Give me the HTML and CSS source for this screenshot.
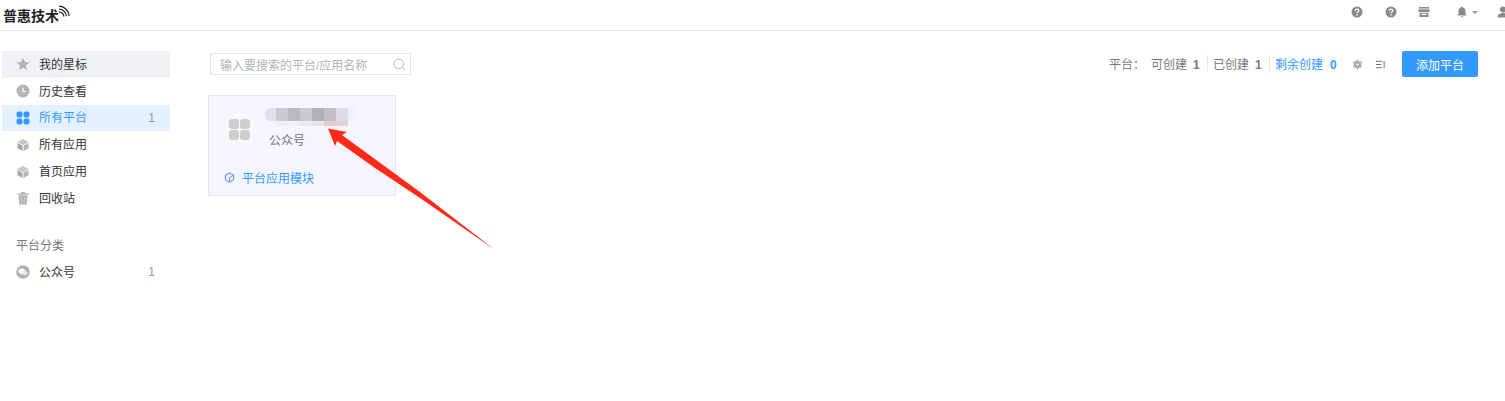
FILE: index.html
```html
<!DOCTYPE html>
<html>
<head>
    <title>普惠技术</title>
    <link rel="stylesheet" href="styles.css">
</head>
<body>
    <header class="top-bar">
        <div class="logo">普惠技术<svg class="logo-wifi" viewBox="0 0 12 12" width="12" height="12"><path d="M1 1.200C6 1 11 5.500 11 11M1 4C4.800 4 8.400 7.500 8.400 11.200M1 6.800C3.400 6.800 5.800 9 5.800 11.400" fill="none" stroke="#222" stroke-width="1.200"/></svg></div>
        <div class="top-icons">
            <svg class="top-icon" viewBox="0 0 12 12"><circle cx="6" cy="6" r="5.500" fill="#8a8a8a"/><path d="M4.200 4.700C4.300 2.600 7.900 2.700 7.800 4.700C7.800 6 6 6 6 7.300" fill="none" stroke="#fff" stroke-width="1.200"/><rect x="5.300" y="8.200" width="1.400" height="1.400" fill="#fff"/></svg>
            <svg class="top-icon" viewBox="0 0 12 12"><circle cx="6" cy="6" r="5.500" fill="#8a8a8a"/><path d="M4.200 4.700C4.300 2.600 7.900 2.700 7.800 4.700C7.800 6 6 6 6 7.300" fill="none" stroke="#fff" stroke-width="1.200"/><rect x="5.300" y="8.200" width="1.400" height="1.400" fill="#fff"/></svg>
            <svg class="top-icon store" viewBox="0 0 12 12"><path d="M1 1h10v1.500H1zM.5 3.200h11V6H.5zM1.500 6.800h9V11h-9z" fill="#8a8a8a"/><rect x="3.500" y="7.800" width="5" height="1.200" fill="#fff"/></svg>
            <span class="bell-group">
                <svg class="top-icon" viewBox="0 0 12 12"><path d="M6 .5C6.600 .5 7 1 7 1.500C8.800 2 9.500 3.500 9.500 5.500V8L10.800 9.600H1.200L2.500 8V5.500C2.500 3.500 3.200 2 5 1.500C5 1 5.400 .5 6 .5ZM4.700 10.300H7.300C7.200 11.800 4.800 11.800 4.700 10.300Z" fill="#8a8a8a"/></svg>
                <span class="caret"></span>
            </span>
            <svg class="top-icon" viewBox="0 0 12 12"><circle cx="6" cy="3.500" r="3" fill="#8a8a8a"/><path d="M.5 11.500C.5 8 3 7 6 7S11.500 8 11.500 11.500Z" fill="#8a8a8a"/></svg>
        </div>
    </header>

    <div class="page">
        <aside class="sidebar">
            <ul class="nav-list">
                <li class="nav-item starred">
                    <svg class="nav-icon" viewBox="0 0 14 14"><path d="M7 .8L8.900 4.900L13.400 5.400L10 8.500L11 13L7 10.700L3 13L4 8.500L.6 5.400L5.100 4.900Z" fill="#b4b4b4"/></svg>
                    <span class="nav-label">我的星标</span>
                </li>
                <li class="nav-item">
                    <svg class="nav-icon" viewBox="0 0 14 14"><circle cx="7" cy="7" r="6.500" fill="#b4b4b4"/><path d="M7 3.500V7.500H10" fill="none" stroke="#fff" stroke-width="1.200"/></svg>
                    <span class="nav-label">历史查看</span>
                </li>
                <li class="nav-item active">
                    <svg class="nav-icon" viewBox="0 0 14 14"><g fill="#3399ff"><rect x=".5" y=".5" width="6" height="6" rx="2.200"/><rect x="7.500" y=".5" width="6" height="6" rx="2.200"/><rect x=".5" y="7.500" width="6" height="6" rx="2.200"/><rect x="7.500" y="7.500" width="6" height="6" rx="2.200"/></g></svg>
                    <span class="nav-label">所有平台</span>
                    <span class="nav-count">1</span>
                </li>
                <li class="nav-item">
                    <svg class="nav-icon" viewBox="0 0 14 14"><path d="M7 1L12.500 4L7 7L1.500 4Z" fill="#c4c4c4"/><path d="M1.500 4.800L6.500 7.700V13L1.500 10.200Z" fill="#a8a8a8"/><path d="M12.500 4.800L7.500 7.700V13L12.500 10.200Z" fill="#b4b4b4"/></svg>
                    <span class="nav-label">所有应用</span>
                </li>
                <li class="nav-item">
                    <svg class="nav-icon" viewBox="0 0 14 14"><path d="M7 1L12.500 4L7 7L1.500 4Z" fill="#c4c4c4"/><path d="M1.500 4.800L6.500 7.700V13L1.500 10.200Z" fill="#a8a8a8"/><path d="M12.500 4.800L7.500 7.700V13L12.500 10.200Z" fill="#b4b4b4"/></svg>
                    <span class="nav-label">首页应用</span>
                </li>
                <li class="nav-item">
                    <svg class="nav-icon" viewBox="0 0 14 14"><path d="M1.500 2.300H12.500V3.700H1.500ZM5 1H9V2.300H5Z" fill="#b4b4b4"/><path d="M2.500 4.300H11.500L10.800 13.500H3.200Z" fill="#b4b4b4"/><path d="M5.500 6V11.500M8.500 6V11.500" stroke="#c8c8d2" stroke-width="1"/></svg>
                    <span class="nav-label">回收站</span>
                </li>
            </ul>
            <div class="nav-title">平台分类</div>
            <ul class="nav-list">
                <li class="nav-item">
                    <svg class="nav-icon" viewBox="0 0 14 14"><circle cx="7" cy="7" r="6.800" fill="#b0b0b0"/><ellipse cx="5.800" cy="6.200" rx="3.400" ry="2.600" fill="#fff"/><ellipse cx="8.800" cy="8" rx="2.800" ry="2.200" fill="#e8e8e8"/></svg>
                    <span class="nav-label">公众号</span>
                    <span class="nav-count">1</span>
                </li>
            </ul>
        </aside>

        <main class="content">
            <div class="toolbar">
                <div class="search-box">
                    <span class="search-hint">输入要搜索的平台/应用名称</span>
                    <svg class="search-icon" viewBox="0 0 13 13"><circle cx="5.800" cy="5.800" r="4.800" fill="none" stroke="#b8b8b8" stroke-width="1"/><path d="M9.300 9.300L12 12" stroke="#b8b8b8" stroke-width="1"/></svg>
                </div>
                <div class="toolbar-right">
                    <div class="stats">
                        <span class="stats-title">平台：</span>
                        <span class="stat">可创建<b>1</b></span>
                        <span class="stat">已创建<b>1</b></span>
                        <span class="stat remain">剩余创建<b>0</b></span>
                    </div>
                    <svg class="tool-icon gear" viewBox="0 0 12 12"><g fill="none" stroke="#888" stroke-width=".9"><circle cx="6" cy="6" r="1.600"/><path d="M6 .8L10.500 8.700H1.500Z"/><path d="M6 11.200L10.500 3.300H1.500Z"/></g></svg>
                    <svg class="tool-icon" viewBox="0 0 12 12"><path d="M1 2.500H8M1 6H7M1 9.500H8" stroke="#666" stroke-width="1"/><path d="M10 3.500V10" stroke="#5a8fd0" stroke-width="1.200"/><path d="M8.500 4.500L10 2.800L11.500 4.500" fill="none" stroke="#888" stroke-width=".8"/></svg>
                    <button class="add-btn">添加平台</button>
                </div>
            </div>

            <div class="card">
                <div class="card-head">
                    <div class="card-logo">
                        <div class="logo-grid"><i></i><i></i><i></i><i></i></div>
                    </div>
                    <div class="card-info">
                        <div class="blur-name">
                            <i class="b1"></i><i class="b2"></i><i class="b3"></i><i class="b4"></i><i class="b5"></i><i class="b6"></i><i class="b7"></i><i class="b8"></i>
                        </div>
                        <div class="card-type">公众号</div>
                    </div>
                </div>
                <div class="card-foot">
                    <svg class="foot-icon" viewBox="0 0 12 12"><path d="M6 1L10.500 3.500V8.500L6 11L1.500 8.500V3.500Z" fill="none" stroke="#5c8df0" stroke-width="1.100"/><path d="M6 6L10 3.800M6 6V10.500" stroke="#5c8df0" stroke-width="1"/></svg>
                    <span>平台应用模块</span>
                </div>
            </div>
        </main>
    </div>

    <svg class="arrow" viewBox="0 0 1505 401" width="1505" height="401"><path d="M328 128.500L347 132L342 135L420 192L495 250L420 198L375 168L337 141L335 146Z" fill="#ff2a17"/></svg>
</body>
</html>
```

FILE: styles.css
```css
* {
    box-sizing: border-box;
}
body {
    margin: 0;
    font-family: "Liberation Sans", "Noto Sans CJK SC", sans-serif;
    font-size: 12px;
    color: #333;
    background: #fff;
    overflow: hidden;
}
ul {
    list-style: none;
    margin: 0;
    padding: 0;
}
i {
    display: block;
}

.top-bar {
    display: flex;
    justify-content: space-between;
    align-items: center;
    height: 31px;
    padding-left: 3px;
    border-bottom: 1px solid #e8e8e8;
    overflow: hidden;
}
.logo {
    display: flex;
    align-items: flex-start;
    font-size: 14px;
    font-weight: bold;
    color: #222;
    line-height: 24px;
    margin-top: 2px;
}
.logo-wifi {
    margin-top: 1px;
    margin-left: -1px;
}
.top-icons {
    display: flex;
    align-items: center;
    gap: 22px;
    margin-right: -4px;
    margin-top: -6px;
}
.top-icon {
    display: block;
    width: 12px;
    height: 12px;
    flex-shrink: 0;
}
.top-icon.store {
    margin-left: -1px;
}
.bell-group {
    display: flex;
    align-items: center;
    gap: 4px;
    margin-left: 4px;
    margin-right: -3px;
}
.caret {
    width: 0;
    height: 0;
    border-left: 3px solid transparent;
    border-right: 3px solid transparent;
    border-top: 3px solid #999;
}

.page {
    display: flex;
}
.sidebar {
    width: 170px;
    padding: 20px 0 0 2px;
    flex-shrink: 0;
}
.nav-item {
    display: flex;
    align-items: center;
    height: 26.8px;
    padding: 0 15px 0 14px;
    color: #333;
}
.nav-item.starred {
    background: #f0f1f5;
}
.nav-item.active {
    background: #e3f1fe;
    color: #3399ff;
}
.nav-icon {
    width: 14px;
    height: 14px;
    flex-shrink: 0;
    margin-right: 9px;
}
.nav-label {
    flex: 1;
    margin-bottom: 2px;
}
.nav-count {
    color: #999;
}
.nav-title {
    margin: 24px 0 0 14px;
    height: 23px;
    line-height: 20px;
    color: #777;
}

.content {
    flex: 1;
    padding: 20px 27px 0 38px;
}
.toolbar {
    display: flex;
    justify-content: space-between;
    align-items: center;
    height: 26px;
}
.search-box {
    display: flex;
    justify-content: space-between;
    align-items: center;
    width: 201px;
    height: 22px;
    margin-left: 2px;
    padding: 0 4px 0 9px;
    border: 1px solid #e6e6e6;
}
.search-hint {
    color: #b4b4b4;
}
.search-icon {
    width: 13px;
    height: 13px;
}
.toolbar-right {
    display: flex;
    align-items: center;
}
.stats {
    display: flex;
    align-items: center;
    color: #777;
    margin-bottom: 2px;
}
.stats-title {
    width: 42px;
}
.stat {
    display: flex;
    align-items: center;
    height: 16px;
    padding-right: 6px;
    margin-right: 5px;
    border-right: 1px solid #e8e8e8;
}
.stat b {
    margin: 4px 0 0 6px;
    width: 8px;
    color: #777;
}
.stat.remain {
    color: #3399ff;
    border-right: none;
    margin-right: 0;
    padding-right: 0;
}
.stat.remain b {
    margin-left: 7px;
    color: #3399ff;
}
.tool-icon {
    width: 11px;
    height: 11px;
    margin-left: 12px;
}
.tool-icon.gear {
    margin-left: 14px;
}
.add-btn {
    width: 76px;
    height: 26px;
    margin-left: 16px;
    padding: 0;
    border: none;
    border-radius: 2px;
    background: #3399ff;
    color: #fff;
    font-family: inherit;
    font-size: 12px;
}

.card {
    display: flex;
    flex-direction: column;
    justify-content: space-between;
    width: 188px;
    height: 101px;
    margin-top: 18px;
    padding: 12px 0 9px 13px;
    background: #f4f5fe;
    border: 1px solid #e6e8f0;
}
.card-head {
    display: flex;
}
.card-logo {
    display: flex;
    justify-content: center;
    align-items: center;
    width: 33px;
    height: 33px;
    margin: 5px 0 0 1px;
    border-radius: 50%;
    background: #f8f8fb;
}
.logo-grid {
    display: grid;
    grid-template-columns: 10px 10px;
    gap: 1px;
}
.logo-grid i {
    height: 10px;
    border-radius: 3px;
    background: #cdcdcd;
}
.card-info {
    margin-left: 9px;
}
.blur-name {
    display: flex;
    height: 18px;
}
.blur-name i {
    width: 12px;
    height: 13px;
}
.blur-name .b1 {
    width: 11px;
    background: #e0e0ea;
    border-radius: 6px 0 0 6px;
}
.blur-name .b2 {
    background: #c9c9cf;
    box-shadow: 0 5px 0 #eeeff8;
}
.blur-name .b3 {
    background: #b9b9c0;
    box-shadow: 0 5px 0 #eeeff8;
}
.blur-name .b4 {
    background: #c9c9cf;
    box-shadow: 0 5px 0 #e8e9f2;
}
.blur-name .b5 {
    background: #b0b0b6;
    box-shadow: 0 5px 0 #e4e5ee;
}
.blur-name .b6 {
    background: #c0c0c6;
    box-shadow: 0 5px 0 #e8ccd4;
}
.blur-name .b7 {
    background: #dcdce8;
    box-shadow: 0 5px 0 #e8ccd4;
}
.blur-name .b8 {
    width: 8px;
    background: #eff0f9;
    border-radius: 0 6px 6px 0;
}
.card-type {
    margin: 7px 0 0 4px;
    color: #777;
    line-height: 17px;
}
.card-foot {
    display: flex;
    align-items: center;
    height: 18px;
    padding-left: 2px;
    color: #3399ff;
}
.foot-icon {
    width: 11px;
    height: 11px;
    margin-right: 7px;
}

.arrow {
    position: absolute;
    top: 0;
    left: 0;
    pointer-events: none;
}
```
